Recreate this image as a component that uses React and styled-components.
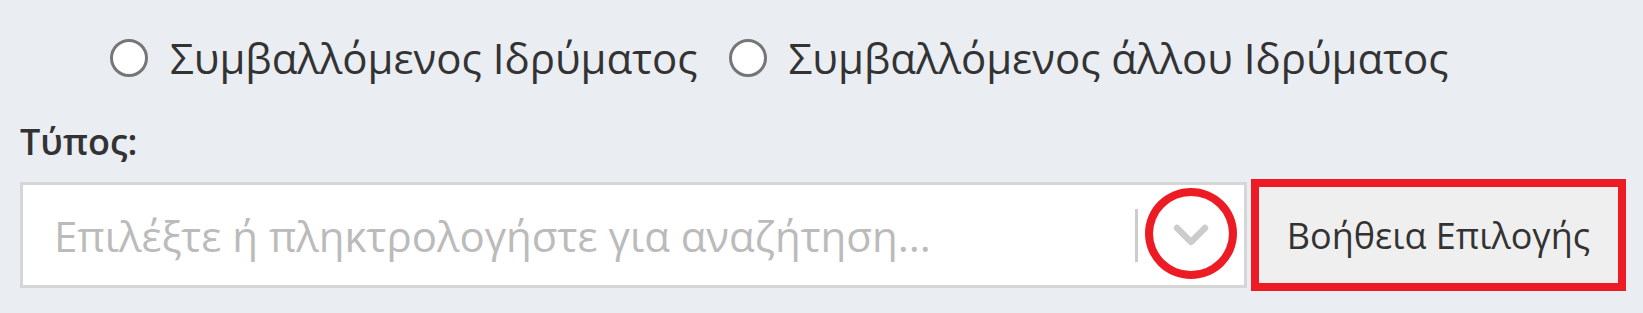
import React from 'react';
import styled, { createGlobalStyle } from 'styled-components';

const GlobalStyle = createGlobalStyle`
  body {
    margin: 0;
    background-color: #eaedf2;
    font-family: "Open Sans", "Liberation Sans", sans-serif;
    color: #333;
  }
`;

const Page = styled.div`
  width: 1643px;
  height: 313px;
  padding: 20px 0 0 20px;
  box-sizing: border-box;
  display: flex;
  flex-direction: column;
`;

const RadioRow = styled.div`
  display: flex;
  align-items: center;
  gap: 31px;
  padding-left: 90px;
  height: 76px;
`;

const RadioLabel = styled.label`
  display: flex;
  align-items: center;
  gap: 22px;
  font-size: 42px;
  line-height: 1;
  color: #333;
`;

const RadioDot = styled.span`
  width: 38px;
  height: 38px;
  box-sizing: border-box;
  border-radius: 50%;
  border: 3px solid #767676;
  background-color: #fff;
  flex-shrink: 0;
`;

const FieldLabel = styled.div`
  font-size: 36px;
  font-weight: 600;
  color: #333;
  margin-top: 23px;
  height: 46px;
  line-height: 46px;
`;

const FieldRow = styled.div`
  display: flex;
  align-items: center;
  gap: 4px;
  margin-top: 14px;
  height: 112px;
`;

const SelectBox = styled.div`
  position: relative;
  width: 1227px;
  height: 106px;
  box-sizing: border-box;
  border: 3px solid #d6d6d6;
  background-color: #fff;
  display: flex;
  align-items: center;
`;

const Placeholder = styled.div`
  flex: 1;
  padding-left: 31px;
  font-size: 42px;
  color: #bbbbbb;
  white-space: nowrap;
`;

const Separator = styled.span`
  width: 3px;
  height: 53px;
  background-color: #cccccc;
`;

const Indicator = styled.div`
  width: 106px;
  display: flex;
  justify-content: center;
  align-items: center;
`;

const Highlight = styled.span`
  position: absolute;
  left: 1122px;
  top: 3px;
  width: 92px;
  height: 91px;
  border: 8px solid #ed1c24;
  border-radius: 50%;
  box-sizing: border-box;
`;

const HelpButton = styled.button`
  width: 375px;
  height: 112px;
  box-sizing: border-box;
  border: 8px solid #ed1c24;
  background-color: #efefef;
  font-family: "Open Sans", "Liberation Sans", sans-serif;
  font-size: 36px;
  color: #333;
  padding: 0;
`;

const Chevron = () => (
  <svg width="36" height="22" viewBox="0 0 36 22">
    <path d="M4 4 L18 18 L32 4" fill="none" stroke="#cccccc" strokeWidth="6.5" strokeLinecap="round" strokeLinejoin="round" />
  </svg>
);

const App = () => {
  return (
    <>
      <GlobalStyle />
      <Page>
        <RadioRow>
          <RadioLabel>
            <RadioDot />
            Συμβαλλόμενος Ιδρύματος
          </RadioLabel>
          <RadioLabel>
            <RadioDot />
            Συμβαλλόμενος άλλου Ιδρύματος
          </RadioLabel>
        </RadioRow>
        <FieldLabel>Τύπος:</FieldLabel>
        <FieldRow>
          <SelectBox>
            <Placeholder>Επιλέξτε ή πληκτρολογήστε για αναζήτηση...</Placeholder>
            <Separator />
            <Indicator>
              <Chevron />
            </Indicator>
            <Highlight />
          </SelectBox>
          <HelpButton>Βοήθεια Επιλογής</HelpButton>
        </FieldRow>
      </Page>
    </>
  );
};

export default App;
